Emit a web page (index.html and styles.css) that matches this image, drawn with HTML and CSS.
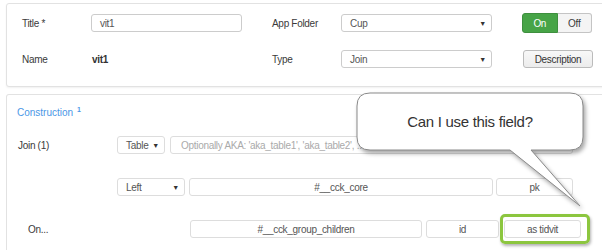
FILE: index.html
```html
<!DOCTYPE html>
<html lang="en">
<head>
    <meta charset="UTF-8">
    <title>App - Edit</title>
    <link rel="stylesheet" href="styles.css">
</head>
<body>
    <div class="panel panel-top">
        <div class="row">
            <span class="label">Title *</span>
            <div class="field input">vit1</div>
            <span class="label gap">App Folder</span>
            <div class="field select"><span>Cup</span><span class="caret">&#9660;</span></div>
            <div class="toggle"><span class="on">On</span><span class="off">Off</span></div>
        </div>
        <div class="row">
            <span class="label">Name</span>
            <div class="field value">vit1</div>
            <span class="label gap">Type</span>
            <div class="field select"><span>Join</span><span class="caret">&#9660;</span></div>
            <button class="btn">Description</button>
        </div>
    </div>

    <div class="panel panel-build">
        <div class="title">Construction <sup>1</sup></div>

        <div class="row row-join">
            <span class="label wide">Join (1)</span>
            <div class="field select sel-table"><span>Table</span><span class="caret">&#9660;</span></div>
            <div class="field input placeholder aka">Optionally AKA: 'aka_table1', 'aka_table2', ...</div>
        </div>

        <div class="row row-left">
            <span class="label wide"></span>
            <div class="field select sel-left"><span>Left</span><span class="caret">&#9660;</span></div>
            <div class="field input center t-core">#__cck_core</div>
            <div class="field input center t-key">pk</div>
        </div>

        <div class="row row-on">
            <span class="label wide on-label">On...</span>
            <div class="field input center t-child">#__cck_group_children</div>
            <div class="field input center t-id">id</div>
            <div class="hl">
                <div class="field input center t-key">as tidvit</div>
            </div>
        </div>
    </div>

    <!-- tooltip bubble -->
    <div class="callout">
        <svg width="252" height="125" viewBox="0 0 252 125">
            <path d="M20,5 H220 Q233,5 233,18 V49 Q233,62 220,62 H181 L230,118 L160,62 H20 Q7,62 7,49 V18 Q7,5 20,5 Z"/>
        </svg>
        <div class="callout-text">Can I use this field?</div>
    </div>
</body>
</html>
```

FILE: styles.css
```css
* {
    margin: 0;
    padding: 0;
    box-sizing: border-box;
}

body {
    font-family: "Liberation Sans", Arial, sans-serif;
    font-size: 10px;
    letter-spacing: -0.3px;
    color: #3a3a3a;
    background: #fff;
    padding-top: 3px;
    overflow: hidden;
    height: 250px;
    position: relative;
}

.panel {
    margin-left: 6px;
    width: 620px;
    border: 1px solid #e2e2e2;
    border-radius: 3px;
    background: #fff;
    box-shadow: 0 1px 2px rgba(0,0,0,0.06);
}

.panel-top {
    height: 84px;
    padding: 9px 0 0 15px;
}

.panel-build {
    margin-top: 7px;
    height: 156px;
    border-bottom: none;
    border-radius: 3px 3px 0 0;
    box-shadow: none;
    padding: 9px 0 0 10px;
}

.row {
    display: flex;
    align-items: center;
    height: 20px;
}

.panel-top .row + .row {
    margin-top: 16px;
}

.label {
    width: 69px;
    flex: none;
}

.label.gap {
    margin-left: 30px;
}

.label.wide {
    width: 100px;
}

.field {
    height: 18px;
    width: 151px;
    flex: none;
    border: 1px solid #ccc;
    border-radius: 3px;
    background: #fff;
    color: #555;
    display: flex;
    align-items: center;
    padding: 0 8px;
}

.field.value {
    border-color: transparent;
    padding: 0;
    font-weight: bold;
    color: #333;
}

.select {
    justify-content: space-between;
    padding-right: 5px;
}

.caret {
    font-size: 7px;
    color: #333;
}

.toggle {
    margin-left: 30px;
    display: flex;
    height: 20px;
    width: 70px;
}

.toggle span {
    flex: 1;
    display: flex;
    align-items: center;
    justify-content: center;
}

.toggle .on {
    background: #47a447;
    color: #fff;
    border: 1px solid #3e8f3e;
    border-radius: 3px 0 0 3px;
}

.toggle .off {
    background: #f4f4f4;
    border: 1px solid #c4c4c4;
    border-left: none;
    border-radius: 0 3px 3px 0;
}

.btn {
    margin-left: 31px;
    width: 70px;
    height: 18px;
    font-family: inherit;
    font-size: 10px;
    letter-spacing: -0.3px;
    color: #333;
    background: linear-gradient(#f8f8f8, #ececec);
    border: 1px solid #bbb;
    border-radius: 3px;
}

/* construction block */
.title {
    color: #4b97e6;
    letter-spacing: 0;
    line-height: 12px;
}

.title sup {
    font-size: 7px;
    font-weight: bold;
    margin-left: 1px;
}

.panel-build .label {
    padding-left: 1px;
}

.panel-build .field {
    border-color: #ddd;
}

.row-join {
    margin-top: 16px;
}

.row-left,
.row-on {
    margin-top: 22px;
}

.on-label {
    padding-left: 11px !important;
    width: 173px !important;
}

.center {
    justify-content: center;
}

.placeholder {
    color: #aaa;
    padding-left: 10px;
}

.sel-table { width: 48px; }
.aka { width: 403px; margin-left: 5px; }
.sel-left { width: 68px; }
.t-core { width: 304px; margin-left: 4px; }
.t-key { width: 77px; margin-left: 3px; }
.t-child { width: 232px; }
.t-id { width: 73px; margin-left: 4px; }

.hl {
    position: relative;
    margin-left: 5px;
}

.hl .t-key {
    margin-left: 0;
}

.hl::after {
    content: "";
    position: absolute;
    top: -6px;
    left: -4px;
    right: -9px;
    bottom: -6px;
    border: 3px solid #8cc63f;
    border-radius: 5px;
    box-shadow: 1px 2px 3px rgba(0,0,0,0.3);
}

/* callout */
.callout {
    position: absolute;
    left: 350px;
    top: 88px;
    width: 252px;
    height: 125px;
}

.callout svg {
    display: block;
    filter: drop-shadow(2px 3px 2px rgba(0,0,0,0.35));
}

.callout path {
    fill: #fff;
    stroke: #8a8a8a;
    stroke-width: 1;
}

.callout-text {
    position: absolute;
    left: 7px;
    top: 5px;
    width: 226px;
    height: 57px;
    display: flex;
    align-items: center;
    justify-content: center;
    font-size: 15px;
    color: #333;
}
```
